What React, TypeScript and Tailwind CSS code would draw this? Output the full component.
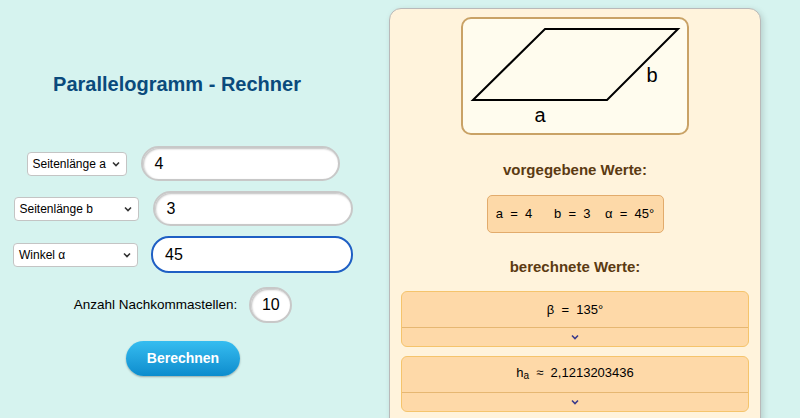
const font = { fontFamily: '"Liberation Sans", Arial, sans-serif' }

function Chevron({ className = '' }: { className?: string }) {
  return (
    <svg width="8" height="6" viewBox="0 0 8 6" className={className}>
      <path d="M1 1.5 L4 4.5 L7 1.5" fill="none" stroke="currentColor" strokeWidth="1.6" />
    </svg>
  )
}

function FakeSelect({ label, width }: { label: string; width: string }) {
  return (
    <div
      className={`${width} flex h-[24px] items-center justify-between rounded-[4px] border border-[#c4c4c4] bg-white pl-[5px] pr-[6px] text-[12px] text-black`}
    >
      <span>{label}</span>
      <Chevron className="text-[#333]" />
    </div>
  )
}

function TextField({ value, width }: { value: string; width: string }) {
  return (
    <div
      className={`${width} flex h-[35px] items-center rounded-[18px] border-2 border-[#c8c8c8] bg-white px-[12px] text-[16px] text-black shadow-[inset_1px_1px_2px_rgba(0,0,0,0.25)]`}
    >
      {value}
    </div>
  )
}

function ResultBox({ children }: { children: React.ReactNode }) {
  return (
    <div className="rounded-[6px] border-[1.5px] border-[#f5c46c] bg-[#fed9a8]">
      <div className="flex h-[36px] items-center justify-center border-b border-[#e6b772] text-[13px] text-black">
        {children}
      </div>
      <div className="flex h-[18px] items-center justify-center">
        <Chevron className="text-[#3b3b8c]" />
      </div>
    </div>
  )
}

export default function App() {
  return (
    <div style={font} className="flex h-[418px] w-[800px] overflow-hidden bg-[#d6f3ef]">
      <div className="flex w-[366px] flex-col items-center">
        <h1 className="mt-[73px] pr-[12px] text-[20px] font-bold leading-[22px] text-[#0a4a7c]">
          Parallelogramm - Rechner
        </h1>
        <div className="mt-[51px] flex items-center gap-[14px]">
          <FakeSelect label="Seitenlänge a" width="w-[100px]" />
          <TextField value="4" width="w-[199px]" />
        </div>
        <div className="mt-[10px] flex items-center gap-[14px]">
          <FakeSelect label="Seitenlänge b" width="w-[125px]" />
          <TextField value="3" width="w-[200px]" />
        </div>
        <div className="mt-[10px] flex items-center gap-[13px]">
          <FakeSelect label="Winkel α" width="w-[125px]" />
          <div className="flex h-[37px] w-[202px] items-center rounded-[18px] border-2 border-[#1f5fc4] bg-white px-[12px] text-[16px] text-black">
            45
          </div>
        </div>
        <div className="mt-[14px] flex items-center gap-[12px] text-[13.5px] text-black">
          <span>Anzahl Nachkommastellen:</span>
          <div className="flex h-[36px] w-[43px] items-center justify-center rounded-[18px] border-2 border-[#c8c8c8] bg-white text-[16px] shadow-[inset_1px_1px_2px_rgba(0,0,0,0.25)]">
            10
          </div>
        </div>
        <button className="mt-[18px] h-[35px] w-[114px] rounded-full bg-gradient-to-b from-[#35bdf0] to-[#0b8ccd] text-[14px] font-bold text-white shadow-[0_1px_2px_rgba(0,0,0,0.3)]">
          Berechnen
        </button>
      </div>

      <div className="ml-[23px] mt-[8px] flex h-[430px] w-[372px] flex-col items-center rounded-[12px] border border-[#b9b9b9] bg-[#fff3dc] shadow-[2px_2px_6px_rgba(0,0,0,0.15)]">
        <div className="mt-[8px] h-[118px] w-[228px] rounded-[10px] border-2 border-[#c9a266] bg-[#fffcee]">
          <svg width="224" height="114" viewBox="0 0 224 114">
            <polygon points="10,81 82,10 215,10 144,81" fill="none" stroke="#000" strokeWidth="2" />
            <text x="189" y="63" fontSize="20" textAnchor="middle" fill="#000" style={font}>
              b
            </text>
            <text x="77" y="103" fontSize="20" textAnchor="middle" fill="#000" style={font}>
              a
            </text>
          </svg>
        </div>
        <div className="mt-[26px] text-[15px] font-bold leading-[18px] text-[#5b3a12]">vorgegebene Werte:</div>
        <div className="mt-[16px] flex h-[38px] w-[177px] items-center justify-center rounded-[5px] border border-[#e2ab6c] bg-[#fdd9a8] text-[13px] text-black">
          <span className="whitespace-pre">{'a  =  4      b  =  3    α  =  45°'}</span>
        </div>
        <div className="mt-[25px] text-[15px] font-bold leading-[18px] text-[#5b3a12]">berechnete Werte:</div>
        <div className="mt-[15px] flex w-[348px] flex-col gap-[9px]">
          <ResultBox>
            <span className="whitespace-pre">{'β  =  135°'}</span>
          </ResultBox>
          <ResultBox>
            <span className="relative -top-[2px] whitespace-pre leading-none">
              h<sub className="relative top-[2px] align-baseline text-[10px]">a</sub>
              {'  ≈  2,1213203436'}
            </span>
          </ResultBox>
        </div>
      </div>
    </div>
  )
}
